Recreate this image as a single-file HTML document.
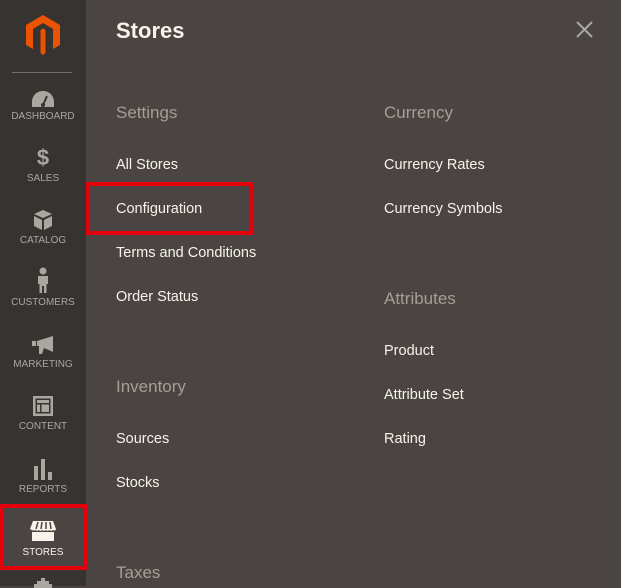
<!DOCTYPE html>
<html><head><style>
*{margin:0;padding:0;box-sizing:border-box}
body{width:621px;height:586px;overflow:hidden;background:#4a4542;font-family:"Liberation Sans",sans-serif;position:relative}
#side{position:absolute;left:0;top:0;width:86px;height:586px;background:#373330}
.it{position:absolute;left:0;width:86px;text-align:center;color:#aaa6a0;font-size:10px;letter-spacing:0}
.it svg{display:block;margin:0 auto}
.t{position:absolute;color:#f7f3eb;font-size:14.5px}
.h{position:absolute;color:#a79d95;font-size:17px}
.red{position:absolute;border:4px solid #e3000b}
</style></head><body>
<div id="side">
<svg style="position:absolute;left:25px;top:15px" width="36" height="40" viewBox="0 0 36 40"><path d="M18 0L35 10V30L28 34V14L18 8L8 14V34L1 30V10Z M15.5 15L18 13.5L20.5 15V38L18 40L15.5 38Z" fill="#eb5202"/></svg>
<div style="position:absolute;left:12px;top:72px;width:60px;height:1px;background:#736d67"></div>
<div class="it" style="top:90px"><svg width="24" height="18" viewBox="0 0 24 18"><path d="M12 1C5.5 1 1 6 1 12V17H23V12C23 6 18.5 1 12 1Z" fill="#aaa6a0"/><path d="M12 15L16 6" stroke="#373330" stroke-width="2"/><circle cx="12" cy="15" r="2" fill="#373330"/></svg><div style="margin-top:3px">DASHBOARD</div></div>
<div class="it" style="top:146px"><div style="font-size:22px;font-weight:bold;height:24px;line-height:24px">$</div><div style="margin-top:3px">SALES</div></div>
<div class="it" style="top:209px"><svg width="20" height="22" viewBox="0 0 20 22"><path d="M10 1L19 5L10 9L1 5Z M1 7L9 11V21L1 17Z M19 7L11 11V21L19 17Z" fill="#aaa6a0"/></svg><div style="margin-top:4px">CATALOG</div></div>
<div class="it" style="top:267px"><svg width="14" height="26" viewBox="0 0 14 26"><circle cx="7" cy="4" r="3.5" fill="#aaa6a0"/><path d="M2 9H12V17H10.5V26H8V19H6V26H3.5V17H2Z" fill="#aaa6a0"/></svg><div style="margin-top:4px">CUSTOMERS</div></div>
<div class="it" style="top:335px"><svg width="24" height="20" viewBox="0 0 24 20"><path d="M1 6H5V11H1Z M6 6L22 1V17L13 13L11 19H8L8 11H6Z" fill="#aaa6a0"/></svg><div style="margin-top:4px">MARKETING</div></div>
<div class="it" style="top:395px"><svg width="22" height="22" viewBox="0 0 22 22"><path d="M1 1H21V21H1Z M3.5 3.5V18.5H18.5V3.5Z M5 5H17V8H5Z M5 9.5H8V17H5Z M9.5 9.5H17V17H9.5Z" fill="#aaa6a0" fill-rule="evenodd"/></svg><div style="margin-top:4px">CONTENT</div></div>
<div class="it" style="top:458px"><svg width="22" height="22" viewBox="0 0 22 22"><path d="M2 8H6V22H2Z M9 1H13V22H9Z M16 14H20V22H16Z" fill="#aaa6a0"/></svg><div style="margin-top:4px">REPORTS</div></div>
<div style="position:absolute;left:0;top:504px;width:88px;height:66px;background:#4a4542;border:4px solid #e3000b"></div>
<div class="it" style="top:520px;color:#f7f3eb"><svg width="26" height="22" viewBox="0 0 26 22"><path d="M3 1H23L26 9C26 10.5 24 11 23 10C22 11 20 11 19.5 10C18.5 11 16.5 11 16 10C15 11 13 11 12.5 10C11.5 11 9.5 11 9 10C8 11 6 11 5.5 10C4 11 2 10.5 0 9Z M2 12H24V21H2Z" fill="#f7f3eb"/><path d="M8 2L6 9M12 2L11 9M16 2L16 9M20 2L21 9" stroke="#4a4542" stroke-width="1.5"/></svg><div style="margin-top:5px">STORES</div></div>
<svg style="position:absolute;left:33px;top:578px" width="20" height="10" viewBox="0 0 20 10"><path d="M8 0H12V3H16V6H19V10H1V6H4V3H8Z" fill="#aaa6a0"/></svg>
</div>
<div class="t" style="left:116px;top:18px;font-size:22px;font-weight:bold;color:#f7f3eb">Stores</div>
<svg style="position:absolute;left:576px;top:21px" width="17" height="17" viewBox="0 0 17 17"><path d="M1 1L16 16M16 1L1 16" stroke="#aaa6a0" stroke-width="2"/></svg>
<div class="h" style="left:116px;top:103px">Settings</div>
<div class="t" style="left:116px;top:157px">All Stores</div>
<div class="t" style="left:116px;top:201px">Configuration</div>
<div class="t" style="left:116px;top:245px">Terms and Conditions</div>
<div class="t" style="left:116px;top:289px">Order Status</div>
<div class="h" style="left:116px;top:377px">Inventory</div>
<div class="t" style="left:116px;top:431px">Sources</div>
<div class="t" style="left:116px;top:475px">Stocks</div>
<div class="h" style="left:116px;top:563px">Taxes</div>
<div class="h" style="left:384px;top:103px">Currency</div>
<div class="t" style="left:384px;top:157px">Currency Rates</div>
<div class="t" style="left:384px;top:201px">Currency Symbols</div>
<div class="h" style="left:384px;top:289px">Attributes</div>
<div class="t" style="left:384px;top:343px">Product</div>
<div class="t" style="left:384px;top:387px">Attribute Set</div>
<div class="t" style="left:384px;top:431px">Rating</div>
<div class="red" style="left:86px;top:182px;width:168px;height:53px"></div>
</body></html>
